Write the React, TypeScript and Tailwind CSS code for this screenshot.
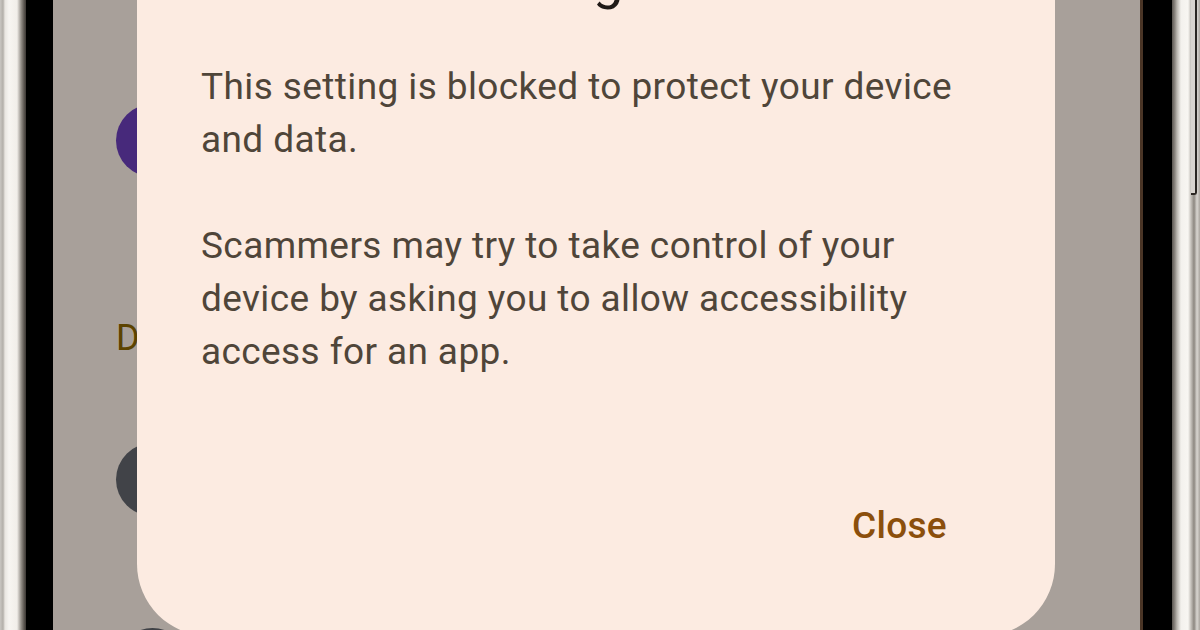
import React from "react";

const FONT = { fontFamily: "Roboto, 'Noto Sans', sans-serif" };

const ListRow = ({ color }: { color: string }) => (
  <div className="flex items-center gap-6 h-[73px]">
    <div className={`w-[73px] h-[73px] rounded-full shrink-0 ${color}`} />
    <div className="flex flex-col">
      <span className="text-[36px] text-[#201a17]">Accessibility app</span>
    </div>
  </div>
);

export default function App() {
  return (
    <div
      className="w-[1200px] h-[630px] overflow-hidden relative flex bg-[#f4f2ef]"
      style={FONT}
    >
      {/* left frame */}
      <div className="w-[26px] h-full bg-[linear-gradient(90deg,#c9c6c1_0px,#b3afa9_3px,#e9e6e1_5px,#f7f5f1_9px,#f1eee9_17px,#97928b_21px,#5c5751_24px,#3b3733_26px)]" />
      <div className="w-[27px] h-full bg-black" />

      {/* screen */}
      <div className="relative flex-1 h-full bg-[#a8a09a]">
        {/* settings list behind the dialog */}
        <div className="flex flex-col pl-[63px] pt-[104px]">
          <ListRow color="bg-[#47297b]" />
          <div className="mt-[141px] text-[36px] leading-[40px] text-[#5c4300]">
            Downloaded apps
          </div>
          <div className="mt-[85px]">
            <ListRow color="bg-[#414348]" />
          </div>
          <div className="mt-[112px]">
            <ListRow color="bg-[#3f4146]" />
          </div>
        </div>

        {/* dialog */}
        <div className="absolute left-[84px] right-[85px] top-[-120px] bottom-[-6px] rounded-[72px] bg-[#fcebe1] flex flex-col pl-[64px] pr-[75px] pt-[68px]">
          <div className="text-[54px] leading-[64px] text-[#201a17]">
            Restricted setting
          </div>
          <div className="mt-[48px] text-[37px] leading-[53px] text-[#4f4539] tracking-[0.4px]">
            <p>This setting is blocked to protect your device and data.</p>
            <p className="mt-[53px]">
              Scammers may try to take control of your device by asking you to
              allow accessibility access for an app.
            </p>
          </div>
          <div className="flex justify-end mt-[121px] pr-[33px]">
            <span className="text-[37px] leading-[53px] font-medium tracking-[0.3px] text-[#8b4f0c]">
              Close
            </span>
          </div>
        </div>
      </div>

      {/* right frame */}
      <div className="w-[3px] h-full bg-[#4a3526]" />
      <div className="w-[29px] h-full bg-black" />
      <div className="w-[28px] h-full bg-[linear-gradient(90deg,#5a5550_0px,#8e8983_3px,#b9b5af_5px,#f3f1ed_9px,#f8f6f2_16px,#c4c0ba_19px,#8c8780_22px,#d9d6d1_25px,#aaa59f_28px)]" />

      {/* side button */}
      <div className="absolute right-[3px] top-0 w-[6px] h-[195px] rounded-br-[3px] border-r-2 border-b-2 border-[#2a2622] bg-[#d8d4cf]" />
    </div>
  );
}
